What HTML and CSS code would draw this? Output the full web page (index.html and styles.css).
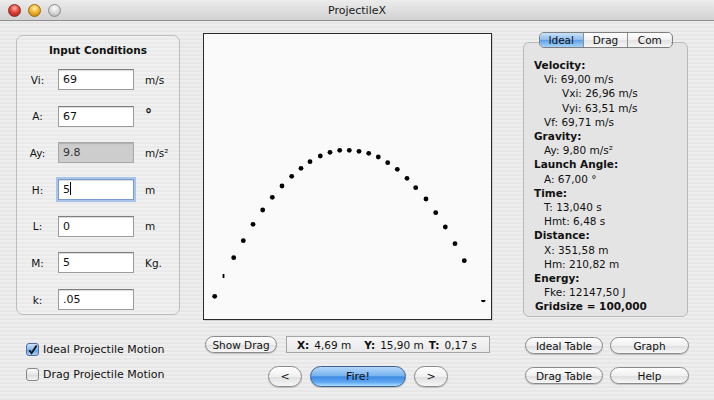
FILE: index.html
```html
<!DOCTYPE html>
<html lang="en">
<head>
    <meta charset="UTF-8">
    <meta name="viewport" content="width=device-width, initial-scale=1.0">
    <title>ProjectileX</title>
    <link rel="stylesheet" href="styles.css">
</head>
<body>
    <div class="window">
        <header class="titlebar">
            <div class="lights">
                <span class="light red"></span>
                <span class="light yellow"></span>
                <span class="light off"></span>
            </div>
            <div class="title">ProjectileX</div>
            <div></div>
        </header>

        <main class="content">
            <section class="inputs">
                <h2>Input Conditions</h2>
                <div class="field"><span class="label">Vi:</span><span class="textbox">69</span><span class="unit">m/s</span></div>
                <div class="field"><span class="label">A:</span><span class="textbox">67</span><span class="unit degree">°</span></div>
                <div class="field"><span class="label">Ay:</span><span class="textbox disabled">9.8</span><span class="unit">m/s²</span></div>
                <div class="field"><span class="label">H:</span><span class="textbox focused">5<span class="caret"></span></span><span class="unit">m</span></div>
                <div class="field"><span class="label">L:</span><span class="textbox">0</span><span class="unit">m</span></div>
                <div class="field"><span class="label">M:</span><span class="textbox">5</span><span class="unit">Kg.</span></div>
                <div class="field"><span class="label">k:</span><span class="textbox">.05</span></div>
            </section>

            <div class="plot">
                <svg viewBox="0 0 287 285" width="287" height="285">
                    <g fill="#000">
                        <circle cx="10.7" cy="262.3" r="2.4"/>
                        <rect x="18.6" y="240" width="1.8" height="4"/>
                        <circle cx="29.7" cy="223.7" r="2.4"/>
                        <circle cx="39.3" cy="206.7" r="2.4"/>
                        <circle cx="49" cy="190.3" r="2.4"/>
                        <circle cx="58.7" cy="176" r="2.4"/>
                        <circle cx="68.3" cy="163.3" r="2.4"/>
                        <circle cx="78" cy="152" r="2.4"/>
                        <circle cx="87.7" cy="142.3" r="2.4"/>
                        <circle cx="97" cy="134.3" r="2.4"/>
                        <circle cx="106" cy="127.7" r="2.4"/>
                        <circle cx="116.3" cy="122" r="2.4"/>
                        <circle cx="126" cy="118.3" r="2.4"/>
                        <circle cx="135.7" cy="116.3" r="2.4"/>
                        <circle cx="145.3" cy="116.3" r="2.4"/>
                        <circle cx="155" cy="117.3" r="2.4"/>
                        <circle cx="164.7" cy="119.3" r="2.4"/>
                        <circle cx="174.3" cy="123" r="2.4"/>
                        <circle cx="183.7" cy="128.7" r="2.4"/>
                        <circle cx="193.3" cy="135.3" r="2.4"/>
                        <circle cx="203" cy="144.3" r="2.4"/>
                        <circle cx="211.7" cy="153.7" r="2.4"/>
                        <circle cx="222" cy="165" r="2.4"/>
                        <circle cx="231.7" cy="178.7" r="2.4"/>
                        <circle cx="241.3" cy="193" r="2.4"/>
                        <circle cx="251" cy="209.7" r="2.4"/>
                        <circle cx="260.3" cy="226.7" r="2.4"/>
                        <path d="M277 266 A2.3 2.3 0 0 0 281.6 266 Z"/>
                    </g>
                </svg>
            </div>

            <section class="results">
                <div class="tabs">
                    <span class="tab active">Ideal</span>
                    <span class="tab">Drag</span>
                    <span class="tab">Com</span>
                </div>
                <div class="result-box">
                    <div class="head">Velocity:</div>
                    <div class="val">Vi: 69,00 m/s</div>
                    <div class="sub">Vxi: 26,96 m/s</div>
                    <div class="sub">Vyi: 63,51 m/s</div>
                    <div class="val">Vf: 69,71 m/s</div>
                    <div class="head">Gravity:</div>
                    <div class="val">Ay: 9,80 m/s²</div>
                    <div class="head">Launch Angle:</div>
                    <div class="val">A: 67,00 °</div>
                    <div class="head">Time:</div>
                    <div class="val">T: 13,040 s</div>
                    <div class="val">Hmt: 6,48 s</div>
                    <div class="head">Distance:</div>
                    <div class="val">X: 351,58 m</div>
                    <div class="val">Hm: 210,82 m</div>
                    <div class="head">Energy:</div>
                    <div class="val">Fke: 12147,50 J</div>
                    <div class="head grid">Gridsize = 100,000</div>
                </div>
            </section>
        </main>

        <footer class="controls">
            <div class="modes">
                <label class="check"><span class="box checked"><svg viewBox="0 0 12 12" width="12" height="12"><path d="M2.5 6.2 L5 9.5 L10.5 1" fill="none" stroke="#111" stroke-width="2"/></svg></span>Ideal Projectile Motion</label>
                <label class="check"><span class="box"></span>Drag Projectile Motion</label>
            </div>

            <div class="run">
                <div class="run-top">
                    <span class="btn show-drag">Show Drag</span>
                    <div class="readout">
                        <b>X:</b><span class="num">4,69 m</span>
                        <b class="gap">Y:</b><span class="num">15,90 m</span>
                        <b class="gap-sm">T:</b><span class="num">0,17 s</span>
                    </div>
                </div>
                <div class="nav">
                    <span class="btn big step">&lt;</span>
                    <span class="btn big fire">Fire!</span>
                    <span class="btn big step">&gt;</span>
                </div>
            </div>

            <div class="actions">
                <span class="btn">Ideal Table</span>
                <span class="btn">Graph</span>
                <span class="btn">Drag Table</span>
                <span class="btn">Help</span>
            </div>
        </footer>
    </div>
</body>
</html>
```

FILE: styles.css
```css
body {
    margin: 0;
    font-family: "DejaVu Sans", "Liberation Sans", sans-serif;
    font-size: 10.5px;
    color: #111;
}

.window {
    width: 714px;
    height: 400px;
    overflow: hidden;
    background: repeating-linear-gradient(#eeeeee 0 2px, #e7e7e7 2px 4px);
}

/* title bar */
.titlebar {
    height: 20px;
    display: grid;
    grid-template-columns: 1fr auto 1fr;
    align-items: center;
    background: linear-gradient(#ececec, #d2d2d2);
    border-bottom: 1px solid #8e8e8e;
}

.lights {
    display: flex;
    gap: 7px;
    padding-left: 8px;
}

.light {
    width: 13px;
    height: 13px;
    border-radius: 50%;
    box-sizing: border-box;
}

.light.red {
    background: radial-gradient(circle at 50% 30%, #ffb3ad 0, #e0443a 45%, #9c1c15 100%);
    border: 1px solid #8b2a24;
}

.light.yellow {
    background: radial-gradient(circle at 50% 30%, #fff0b0 0, #f2b530 45%, #b8760a 100%);
    border: 1px solid #9a6a14;
}

.light.off {
    background: radial-gradient(circle at 50% 30%, #ffffff 0, #d8d8d8 50%, #a9a9a9 100%);
    border: 1px solid #8d8d8d;
}

.title {
    font-size: 11px;
    color: #1a1a1a;
}

/* main area */
.content {
    display: flex;
    align-items: flex-start;
    padding: 12px 0 0 16px;
    height: 287px;
}

.inputs {
    width: 164px;
    height: 280px;
    margin-top: 2px;
    box-sizing: border-box;
    border: 1px solid #bdbdbd;
    border-radius: 7px;
    background: rgba(255, 255, 255, 0.12);
    padding-top: 7px;
    display: flex;
    flex-direction: column;
    gap: 15.7px;
}

.inputs h2 {
    margin: 0 0 -3.7px;
    font-size: 10.5px;
    line-height: 14px;
    text-align: center;
}

.field {
    display: flex;
    align-items: center;
    height: 21px;
    padding-left: 5px;
}

.label {
    width: 31px;
    text-align: center;
    margin-right: 5px;
}

.textbox {
    width: 76px;
    height: 21px;
    box-sizing: border-box;
    border: 1px solid #9c9c9c;
    border-top-color: #7e7e7e;
    background: #fff;
    box-shadow: inset 0 1px 1px rgba(0, 0, 0, 0.15);
    padding: 0 4px;
    line-height: 19px;
    font-size: 11px;
}

.textbox.disabled {
    background: #cdcdcd;
    border-color: #a9a9a9;
    color: #333;
}

.textbox.focused {
    border-color: #7b9bc9;
    box-shadow: 0 0 0 2px #a9c4ea, inset 0 1px 1px rgba(0, 0, 0, 0.15);
}

.caret {
    display: inline-block;
    width: 1px;
    height: 13px;
    background: #000;
    vertical-align: -2px;
}

.unit {
    margin-left: 11px;
    font-size: 10.5px;
}

.unit.degree {
    font-size: 14px;
    font-weight: bold;
    margin-top: -4px;
}

/* plot */
.plot {
    width: 287px;
    height: 285px;
    margin-left: 23px;
    border: 1px solid #2a2a2a;
    background: #fafafa;
    box-shadow: 1px 1px 0 #d0d0d0;
}

.plot svg {
    display: block;
}

/* results */
.results {
    width: 165px;
    margin-left: 31px;
}

.tabs {
    display: flex;
    width: 134px;
    height: 16px;
    margin: -1px auto 0;
    position: relative;
    z-index: 1;
    border: 1px solid #7f7f7f;
    border-radius: 5px;
    overflow: hidden;
    box-sizing: border-box;
}

.tab {
    flex: 1;
    text-align: center;
    line-height: 14px;
    font-size: 10.5px;
    background: linear-gradient(#ffffff, #f1f1f1 50%, #e2e2e2 51%, #f6f6f6);
    border-left: 1px solid #8f8f8f;
}

.tab:first-child {
    border-left: none;
}

.tab.active {
    background: linear-gradient(#c9e1f8, #8bbcef 50%, #5e9fe6 51%, #a6d3fb);
}

.result-box {
    margin-top: -6px;
    height: 275px;
    box-sizing: border-box;
    border: 1px solid #b9b9b9;
    border-radius: 6px;
    background: #e4e4e4;
    padding: 15px 0 0 10px;
    line-height: 14.2px;
}

.head {
    font-weight: bold;
}

.val {
    padding-left: 10px;
}

.sub {
    padding-left: 28px;
}

.head.grid {
    padding-left: 1px;
}

/* bottom controls */
.controls {
    display: flex;
    padding-left: 16px;
}

.modes {
    width: 164px;
    padding: 17px 0 0 10px;
    box-sizing: border-box;
}

.check {
    display: flex;
    align-items: center;
    height: 25px;
    font-size: 11px;
    gap: 4px;
}

.box {
    width: 13px;
    height: 13px;
    box-sizing: border-box;
    border: 1px solid #888;
    border-radius: 3px;
    background: linear-gradient(#fdfdfd, #e6e6e6 50%, #d9d9d9 51%, #f3f3f3);
    display: flex;
    align-items: center;
    justify-content: center;
}

.box.checked {
    border-color: #4d6f9e;
    background: linear-gradient(#cbe3fa, #86b9ef 50%, #5c9de4 51%, #a9d6fc);
}

.run {
    width: 289px;
    margin-left: 23px;
    padding-top: 16px;
}

.run-top {
    display: flex;
    align-items: center;
    height: 17px;
}

.btn {
    display: flex;
    align-items: center;
    justify-content: center;
    height: 17px;
    box-sizing: border-box;
    border: 1px solid #8a8a8a;
    border-radius: 9px;
    background: linear-gradient(#ffffff, #f0f0f0 50%, #dedede 51%, #f7f7f7);
    box-shadow: 0 1px 1px rgba(0, 0, 0, 0.18);
    font-size: 10.5px;
}

.show-drag {
    width: 72px;
    margin-left: 2px;
}

.readout {
    display: flex;
    align-items: center;
    width: 204px;
    height: 17px;
    margin-left: 9px;
    box-sizing: border-box;
    border: 1px solid #a5a5a5;
    background: linear-gradient(#f6f6f6, #e9e9e9);
    padding-left: 10px;
    font-size: 10.5px;
}

.readout .num {
    margin-left: 5px;
}

.readout .gap {
    margin-left: 13px;
}

.readout .gap-sm {
    margin-left: 5px;
}

.nav {
    display: flex;
    gap: 8px;
    margin: 13px 0 0 65px;
}

.btn.big {
    height: 21px;
    border-radius: 11px;
    font-size: 11px;
}

.step {
    width: 34px;
}

.fire {
    width: 96px;
    border-color: #3d628f;
    background: linear-gradient(#b4d7fa, #78b4f0 45%, #3f8ae3 52%, #5fa8f2 80%, #aee0ff);
}

.actions {
    width: 166px;
    margin-left: 31px;
    padding: 17px 0 0 2px;
    display: grid;
    grid-template-columns: 78px 79px;
    column-gap: 7px;
    row-gap: 10px;
}
```
